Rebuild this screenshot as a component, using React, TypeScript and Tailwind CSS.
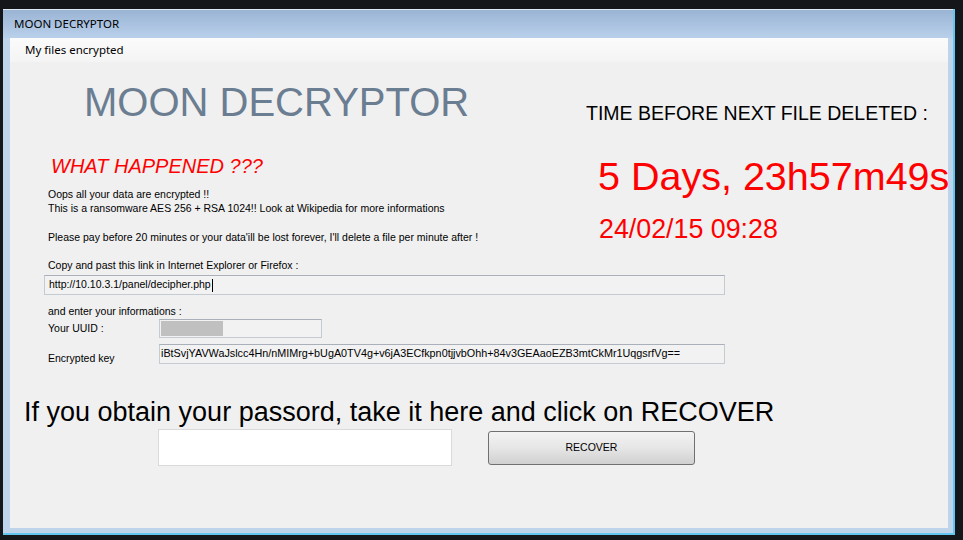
const SANS = "font-['Liberation_Sans',Arial,sans-serif]";
const UI = "font-['Noto_Sans','Open_Sans',sans-serif]";

const KEY =
  "iBtSvjYAVWaJslcc4Hn/nMIMrg+bUgA0TV4g+v6jA3ECfkpn0tjjvbOhh+84v3GEAaoEZB3mtCkMr1UqgsrfVg==";

const TextBox = ({
  className,
  children,
}: {
  className: string;
  children?: React.ReactNode;
}) => (
  <div
    className={`flex items-center border border-[#c5cbd3] border-t-[#a9b0ba] bg-[#f2f2f2] ${className}`}
  >
    {children}
  </div>
);

export default function App() {
  return (
    <div className="h-[540px] w-[963px] overflow-hidden bg-[#15161a] pl-[3px] pt-[9px]">
      <div className="flex h-[526px] w-[952px] flex-col border-b-2 border-r-2 border-[#62c6ee] bg-[#bed4eb]">
        {/* title bar */}
        <div
          className={`flex h-[29px] items-center border-t border-[#dfe8f3] bg-gradient-to-b from-[#9ab4d4] to-[#b9d0ea] pl-[11px] text-[11.5px] text-black ${UI}`}
        >
          MOON DECRYPTOR
        </div>

        <div className="flex flex-1 pb-[5px] pl-[7px] pr-[5px]">
          <div className="flex flex-1 flex-col overflow-hidden bg-[#f0f0f0]">
            {/* tab strip */}
            <div
              className={`flex h-[24px] items-center bg-gradient-to-b from-[#fbfbfb] to-[#f4f4f4] pl-[15px] text-[11.5px] text-black ${UI}`}
            >
              My files encrypted
            </div>

            {/* tab page */}
            <div className={`flex-1 text-[10.5px] text-black ${SANS}`}>
              <div className="flex h-[190px]">
                <div className="w-[576px] shrink-0">
                  <h1 className="ml-[74px] mt-[16px] text-[40px] leading-[48px] text-[#6b7d91]">
                    MOON DECRYPTOR
                  </h1>
                  <p className="ml-[41px] mt-[28px] text-[20px] italic leading-[24px] text-[#ff0000]">
                    WHAT HAPPENED ???
                  </p>
                  <p className="ml-[38px] mt-[9px] leading-[14px]">
                    Oops all your data are encrypted !!
                    <br />
                    This is a ransomware AES 256 + RSA 1024!! Look at Wikipedia
                    for more informations
                  </p>
                  <p className="ml-[38px] mt-[15px] leading-[14px]">
                    Please pay before 20 minutes or your data'ill be lost
                    forever, I'll delete a file per minute after !
                  </p>
                </div>
                <div className="whitespace-nowrap pt-[39px]">
                  <p className="text-[19.5px] leading-[24px]">
                    TIME BEFORE NEXT FILE DELETED :
                  </p>
                  <p className="ml-[12px] mt-[29px] text-[39.5px] leading-[44px] text-[#ff0000]">
                    5 Days, 23h57m49s
                  </p>
                  <p className="ml-[13px] mt-[16px] text-[26.8px] leading-[30px] text-[#ff0000]">
                    24/02/15 09:28
                  </p>
                </div>
              </div>

              {/* link + infos */}
              <p className="ml-[38px] mt-[7px] leading-[13px]">
                Copy and past this link in Internet Explorer or Firefox :
              </p>
              <TextBox className="ml-[34px] mt-[3px] h-[20px] w-[681px] pl-[4px]">
                <span>http://10.10.3.1/panel/decipher.php</span>
                <span className="ml-px h-[13px] w-px bg-black" />
              </TextBox>
              <p className="ml-[38px] mt-[10px] leading-[13px]">
                and enter your informations :
              </p>
              <div className="mt-px flex items-center">
                <span className="ml-[38px] w-[111px] leading-[13px]">
                  Your UUID :
                </span>
                <TextBox className="h-[19px] w-[163px] pl-px">
                  <div className="h-[15px] w-[62px] bg-[#c0c0c0]" />
                </TextBox>
              </div>
              <div className="mt-[6px] flex items-start">
                <span className="ml-[38px] mt-[8px] w-[111px] leading-[13px]">
                  Encrypted key
                </span>
                <TextBox className="h-[20px] w-[566px] items-start pl-px pt-[1px]">
                  <span className="whitespace-nowrap text-[10.8px] leading-[14px]">
                    {KEY}
                  </span>
                </TextBox>
              </div>

              {/* password */}
              <p className="ml-[14px] mt-[31px] whitespace-nowrap text-[27px] leading-[32px]">
                If you obtain your passord, take it here and click on RECOVER
              </p>
              <div className="mt-px flex items-start">
                <div className="ml-[148px] h-[37px] w-[294px] border border-[#dadada] bg-white" />
                <button className="ml-[36px] mt-[2px] flex h-[34px] w-[207px] items-center justify-center rounded-[3px] border border-[#707070] bg-gradient-to-b from-[#f3f3f3] via-[#e6e6e6] to-[#d0d0d0] text-[10.5px] text-black">
                  RECOVER
                </button>
              </div>
            </div>
          </div>
        </div>
      </div>
    </div>
  );
}
